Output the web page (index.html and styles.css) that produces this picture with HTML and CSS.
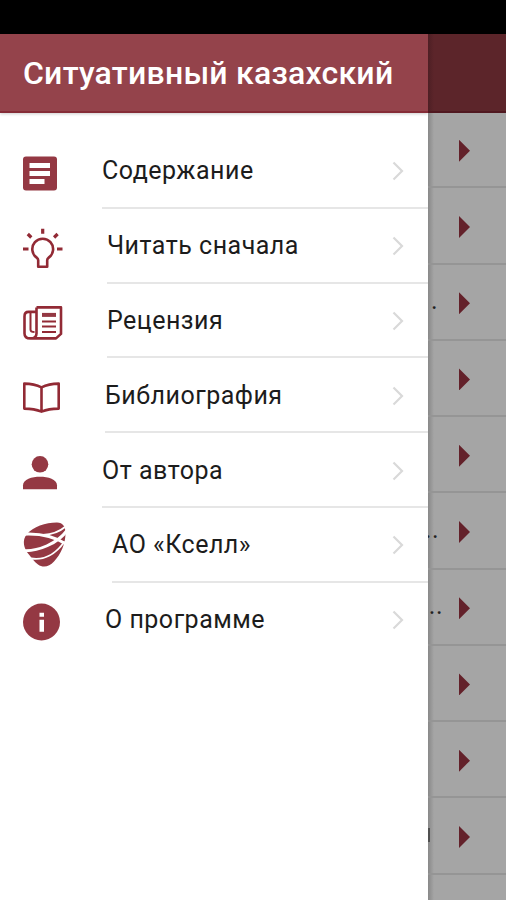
FILE: index.html
```html
<!DOCTYPE html>
<html lang="ru">
<head>
<meta charset="utf-8">
<title>Ситуативный казахский</title>
<link rel="stylesheet" href="styles.css">
</head>
<body>
<div class="status"></div>
<div class="screen">
  <aside class="drawer">
    <header class="title"><span>Ситуативный казахский</span></header>
    <nav class="menu">
      <a class="item">
        <svg class="icon" viewBox="23 151 43 44"><rect class="fill" x="23" y="156.500" width="34" height="34" rx="3"/><path class="cut" d="M29.500 163h20.500v5h-20.500zM29.500 171h20.500v5h-20.500zM29.500 179h15v5h-15z"/></svg>
        <span class="row"><span class="label">Содержание</span><svg class="chev" viewBox="0 0 12 20"><path d="M1.500 1.500L10 10L1.500 18.500"/></svg></span>
      </a>
      <a class="item">
        <svg class="icon" viewBox="23 225.800 43 44"><path class="line" d="M38.200 266.500v-6.500q0-1.500-1.500-2.600a10.400 10.400 0 1 1 12 0q-1.500 1.100-1.500 2.600v6.500z"/><path class="ray" d="M42.700 228.500v5M27.800 233.800l3.500 3.500M57.600 233.800l-3.500 3.500M23 248.800h5.500M57 248.800h5.500"/></svg>
        <span class="row r2"><span class="label">Читать сначала</span><svg class="chev" viewBox="0 0 12 20"><path d="M1.500 1.500L10 10L1.500 18.500"/></svg></span>
      </a>
      <a class="item">
        <svg class="icon" viewBox="23 300.600 43 44"><path class="line" d="M36.500 307h24.500v26.500l-5 4.500h-26M36.500 307v26q0 5-6 5q-6 0-6-5v-17q0-4.500 4-4.500h8"/><path class="thin" d="M30.500 312v17q0 2.500 4 2.500"/><path class="fill" d="M42 312.500h14v4h-14z"/><path class="thin" d="M42 321h14M42 326.200h14M42 331.500h14"/></svg>
        <span class="row r2"><span class="label">Рецензия</span><svg class="chev" viewBox="0 0 12 20"><path d="M1.500 1.500L10 10L1.500 18.500"/></svg></span>
      </a>
      <a class="item">
        <svg class="icon" viewBox="23 375.400 43 44"><path class="line" d="M24.300 384q10 0 17.200 3.700q7.200-3.700 17.200-3.700v25q-10 0-17.200 3q-7.200-3-17.200-3zM41.500 387.700v24.500"/></svg>
        <span class="row r3"><span class="label">Библиография</span><svg class="chev" viewBox="0 0 12 20"><path d="M1.500 1.500L10 10L1.500 18.500"/></svg></span>
      </a>
      <a class="item">
        <svg class="icon" viewBox="23 450.200 43 44"><circle class="fill" cx="40" cy="464.500" r="8.300"/><path class="fill" d="M23 489.500v-4c0-6 9-8.500 17-8.500s17 2.500 17 8.500v4z"/></svg>
        <span class="row"><span class="label">От автора</span><svg class="chev" viewBox="0 0 12 20"><path d="M1.500 1.500L10 10L1.500 18.500"/></svg></span>
      </a>
      <a class="item">
        <svg class="icon" viewBox="23 525 43 44"><path class="fill" d="M27 534C33 527 46 522.500 57 522.600C63 522.800 65.500 527 65.500 533C65.500 544 61 554 54 561.500C49 567 43 568 38 564.500C34 562 32 558 28.500 554C24 549 21.500 540 27 534z"/><path class="swoosh" d="M22 534.300C34 533.500 52 535 66 544"/><path class="swoosh" d="M22 550.500C38 552 58 543 67 530.500"/><path class="swoosh slim" d="M43 535C51 534.500 59 532 65 527M31 558.500C44 560.500 56 554 64.500 541.500"/></svg>
        <span class="row r4"><span class="label">АО «Кселл»</span><svg class="chev" viewBox="0 0 12 20"><path d="M1.500 1.500L10 10L1.500 18.500"/></svg></span>
      </a>
      <a class="item">
        <svg class="icon" viewBox="23 599.800 43 44"><circle class="fill" cx="41.500" cy="621.800" r="18.500"/><path class="cut" d="M39.500 612.500h4.500v4h-4.500zM39.500 619.500h4.500v12h-4.500z"/></svg>
        <span class="row r3 last"><span class="label">О программе</span><svg class="chev" viewBox="0 0 12 20"><path d="M1.500 1.500L10 10L1.500 18.500"/></svg></span>
      </a>
    </nav>
  </aside>
  <main class="page">
    <div class="bar"></div>
    <div class="list">
      <div class="entry"><i class="arrow"></i></div>
      <div class="entry"><i class="arrow"></i></div>
      <div class="entry"><span class="tail t3">.</span><i class="arrow"></i></div>
      <div class="entry"><i class="arrow"></i></div>
      <div class="entry"><i class="arrow"></i></div>
      <div class="entry"><span class="tail t6">..</span><i class="arrow"></i></div>
      <div class="entry"><span class="tail t7">..</span><i class="arrow"></i></div>
      <div class="entry"><i class="arrow"></i></div>
      <div class="entry"><i class="arrow"></i></div>
      <div class="entry"><i class="stem"></i><i class="arrow"></i></div>
      <div class="entry"></div>
    </div>
  </main>
</div>
</body>
</html>
```
FILE: styles.css
```css
* { box-sizing: border-box; }
body {
  margin: 0;
  height: 900px;
  overflow: hidden;
  display: flex;
  flex-direction: column;
  background: #fff;
  font-family: Roboto, "Liberation Sans", sans-serif;
}
.status { height: 34px; flex: none; background: #000; }
.screen { flex: 1; min-height: 0; display: flex; }
.drawer { width: 428px; flex: none; background: #fff; }
.title {
  height: 79px;
  display: flex;
  align-items: center;
  padding: 1px 0 0 23px;
  background: #94434b;
  border-bottom: 2px solid #852c37;
  box-shadow: 0 1px 3px #0003;
  color: #fff;
  font-size: 32px;
  font-weight: 500;
  letter-spacing: 0.23px;
  white-space: nowrap;
}
.menu { padding-top: 21px; }
.item { display: flex; height: 74.8px; padding-left: 23px; }
.icon { width: 43px; height: 44px; margin: 17px 36px 0 0; flex: none; overflow: visible; }
.fill { fill: #943843; }
.cut { fill: #fff; }
.line, .thin, .ray, .swoosh { fill: none; stroke: #922a35; stroke-width: 2.6; stroke-linejoin: round; }
.thin { stroke-width: 2; }
.ray { stroke-width: 3.2; }
.swoosh { stroke: #fff; stroke-width: 3; }
.slim { stroke-width: 1.8; }
.row {
  flex: 1;
  display: flex;
  align-items: center;
  justify-content: space-between;
  padding-right: 24px;
  border-bottom: 2px solid #e6e6e6;
}
.r2 { margin-left: 5px; }
.r3 { margin-left: 3px; }
.r4 { margin-left: 10px; }
.last { border-color: transparent; }
.label { margin-top: 2px; font-size: 25px; line-height: 30px; color: #1c1c1c; white-space: nowrap; letter-spacing: 0.5px; }
.chev { width: 12px; height: 20px; margin-top: 2px; fill: none; stroke: #d9d9d9; stroke-width: 2.2; }
.page {
  flex: 1;
  min-width: 0;
  display: flex;
  flex-direction: column;
  background: linear-gradient(90deg, #888, #a5a5a5 6px);
}
.bar { height: 79px; flex: none; background: linear-gradient(90deg, #4e1f24, #5c252a 6px); border-bottom: 2px solid #501820; }
.list { flex: 1; min-height: 0; overflow: hidden; margin-top: -1px; }
.entry {
  height: 76.25px;
  display: flex;
  align-items: center;
  justify-content: flex-end;
  padding-right: 36px;
  border-bottom: 2px solid #959595;
}
.arrow { width: 11px; height: 22px; flex: none; margin-top: 3px; background: #63212a; clip-path: polygon(0 0, 100% 50%, 0 100%); }
.tail { flex: none; margin-top: -1px; font-size: 25px; line-height: 30px; color: #222; letter-spacing: 0.5px; }
.t3 { margin-right: 21px; }
.t6 { margin-right: 20px; }
.t7 { margin-right: 16px; }
.stem { width: 2px; height: 14px; flex: none; margin-right: 29px; background: #505050; }
```
